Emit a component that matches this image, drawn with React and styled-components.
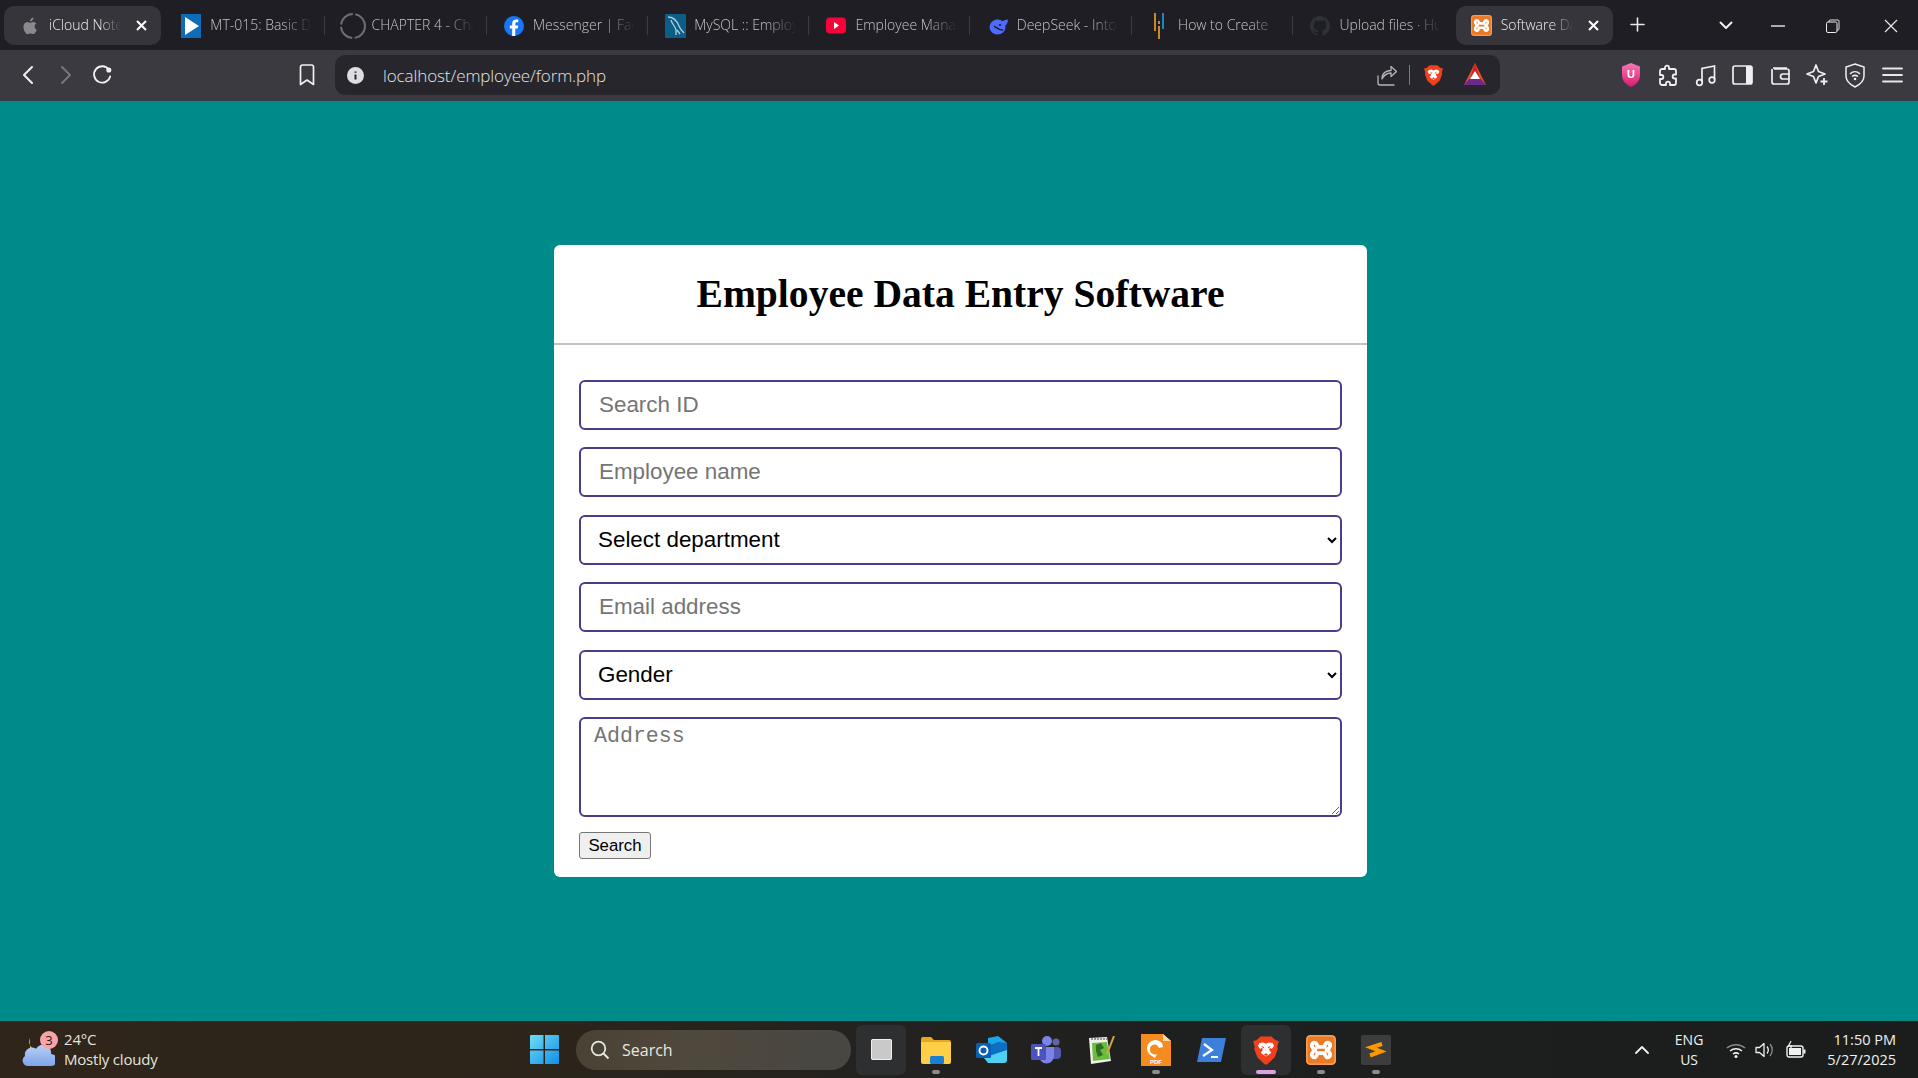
import React from "react";
import styled, { createGlobalStyle } from "styled-components";

const Global = createGlobalStyle`
  html, body { margin: 0; padding: 0; background: #008b8b; }
  * { box-sizing: border-box; }
`;

const Page = styled.div`
  width: 1918px; height: 1078px; overflow: hidden;
  display: flex; flex-direction: column;
  font-family: "Open Sans", "Noto Sans", sans-serif;
`;

/* ---------- tab strip ---------- */
const TabBar = styled.div`
  height: 50px; flex: none; background: #1e1e24;
  display: flex; align-items: flex-start; padding: 6px 0 0 4px; position: relative;
`;
const Tab = styled.div`
  position: relative; width: 157px; height: 39px; margin-right: 4.3px; flex: none;
  display: flex; align-items: center; padding-left: 15px;
  border-radius: 10px;
  background: ${p => (p.$active ? "#35353b" : "transparent")};
  ${p => p.$sep && `
    &::after { content: ""; position: absolute; right: -3px; top: 10px; height: 19px; width: 1px; background: #3b3b42; }
  `}
`;
const TabIcon = styled.span`
  width: 22px; height: 24px; flex: none; display: flex; align-items: center; justify-content: center;
  margin-right: 8px;
`;
const TabTitle = styled.span`
  font-size: 14px; font-weight: 300; white-space: nowrap; overflow: hidden; padding-bottom: 2px;
  color: ${p => (p.$active ? "#f0f0f2" : "#c6c6ca")};
  width: ${p => (p.$active ? "72px" : "102px")};
  -webkit-mask-image: linear-gradient(90deg, #000 70%, transparent 100%);
  mask-image: linear-gradient(90deg, #000 70%, transparent 100%);
`;
const TabClose = styled.span`
  position: absolute; right: 14px; top: 14px; width: 11px; height: 11px; display: flex;
`;
const NewTab = styled.span`
  width: 15px; height: 15px; margin: 11px 0 0 13px; display: flex; flex: none;
`;
const WindowControls = styled.div`
  margin-left: auto; height: 39px; display: flex; align-items: center; padding-right: 19px;
`;
const WinBtn = styled.span`
  display: flex; margin-left: ${p => p.$gap}px; width: 16px; justify-content: center;
`;

/* ---------- toolbar ---------- */
const Toolbar = styled.div`
  height: 51px; flex: none; background: #3a3a40; display: flex; align-items: center;
  padding: 0 13px 1px 18px;
`;
const NavBtn = styled.span`
  display: flex; width: 20px; justify-content: center; flex: none; margin-right: ${p => p.$mr || 0}px;
`;
const UrlBar = styled.div`
  width: 1165px; height: 40px; flex: none; background: #26262c; border-radius: 10px;
  display: flex; align-items: center; padding-left: 12px; margin-right: 119px;
`;
const UrlText = styled.span`
  font-size: 17px; font-weight: 300; color: #e4e4e6; margin-left: 19px; letter-spacing: -0.1px; flex: 1;
`;
const UrlIcon = styled.span`
  display: flex; margin-right: ${p => p.$mr || 0}px; flex: none;
`;
const UrlSep = styled.span`
  width: 1px; height: 20px; background: #77777c; margin-right: 14px; flex: none;
`;
const ExtIcons = styled.div`
  display: flex; align-items: center; gap: 13.3px;
`;
const ExtIcon = styled.span` display: flex; width: 24px; justify-content: center; `;

/* ---------- page ---------- */
const Main = styled.main`
  flex: 1; background: #008b8b; display: flex; align-items: center; justify-content: center;
  padding-left: 3px;
`;
const Card = styled.div`
  width: 813px; background: #fff; border-radius: 6px;
`;
const CardHeader = styled.header`
  height: 100px; border-bottom: 2px solid #c2c2c2; display: flex; align-items: center; justify-content: center;
`;
const Title = styled.h1`
  margin: 0; font: bold 39.6px "Liberation Serif", serif; color: #000;
`;
const Form = styled.form`
  padding: 35px 25px 18px 25px; display: flex; flex-direction: column; gap: 17.5px; align-items: flex-start;
`;
const fieldBase = `
  width: 763px; border: 2px solid #483d8b; border-radius: 6px; background: #fff; outline: none;
`;
const TextField = styled.input`
  ${fieldBase}
  height: 50px; padding: 0 18px; font: 22.4px "Liberation Sans", sans-serif; color: #000;
  &::placeholder { color: #757575; opacity: 1; }
`;
const SelectField = styled.select`
  ${fieldBase}
  height: 50px; padding: 0 2px 0 13px; font: 22.4px "Liberation Sans", sans-serif; color: #000;
`;
const AreaField = styled.textarea`
  ${fieldBase}
  height: 100px; padding: 5px 13px; font: 21.6px "Liberation Mono", monospace; display: block;
  &::placeholder { color: #757575; opacity: 1; }
`;
const SubmitBtn = styled.button`
  width: 72px; height: 27px; margin-top: -2.5px; padding: 0; border: 1px solid #767676; border-radius: 3px;
  background: #efefef; color: #000; font: 16.8px "Liberation Sans", sans-serif;
`;

/* ---------- taskbar ---------- */
const Taskbar = styled.footer`
  height: 57px; flex: none; display: flex; align-items: center; position: relative;
  background: linear-gradient(90deg, #30251a 0%, #2b251b 28%, #24221f 46%, #1e1f1f 62%, #1b1d1d 100%);
  color: #f2f2f2; padding-left: 22px;
`;
const Weather = styled.div`
  width: 508px; flex: none; display: flex; align-items: center; gap: 9px;
`;
const WeatherIcon = styled.div` position: relative; width: 33px; height: 40px; flex: none; `;
const Badge = styled.span`
  position: absolute; left: 18px; top: 1px; width: 18px; height: 18px; border-radius: 50%;
  background: #f8a3a8; color: #2a1a14; font-size: 13px; line-height: 18px; text-align: center;
`;
const WeatherText = styled.div`
  font-size: 15px; line-height: 20px; display: flex; flex-direction: column; color: #e6e3de;
  letter-spacing: -0.2px; padding-bottom: 2px;
`;
const StartBtn = styled.span` display: flex; margin-right: 17px; flex: none; `;
const SearchPill = styled.div`
  width: 275px; height: 40px; border-radius: 20px; flex: none;
  background: linear-gradient(90deg, #4a4234, #4f483c 40%, #484743);
  display: flex; align-items: center; padding-left: 14px; gap: 12px;
  font-size: 16px; color: #e8e6e2;
`;
const Apps = styled.div` display: flex; gap: 5px; margin-left: 5px; height: 50px; flex: none; `;
const AppCell = styled.div`
  position: relative; width: 50px; height: 50px; border-radius: 6px;
  display: flex; align-items: center; justify-content: center;
  background: ${p => (p.$hl ? "#2e2f30" : "transparent")};
  ${p => p.$dot && `
    &::after { content: ""; position: absolute; bottom: 1px; left: 50%; transform: translateX(-50%);
      height: 4px; border-radius: 2px;
      width: ${p.$dot === "on" ? "20px" : "8px"};
      background: ${p.$dot === "on" ? "#d8a3de" : "#8b8c8c"}; }
  `}
`;
const Tray = styled.div`
  margin-left: auto; display: flex; align-items: center; padding-right: 22px; color: #f0f0f0;
`;
const TrayIcon = styled.span` display: flex; margin-right: ${p => p.$mr}px; `;
const Lang = styled.div`
  font-size: 14px; line-height: 20px; text-align: center; margin-right: 23px; display: flex; flex-direction: column;
`;
const Clock = styled.div`
  font-size: 14.5px; line-height: 20px; text-align: right; display: flex; flex-direction: column; margin-left: 21px;
`;

/* ---------- icons ---------- */
const S = ({ w = 24, h = w, vb, children, ...r }) => (
  <svg width={w} height={h} viewBox={vb || `0 0 ${w} ${h}`} fill="none" {...r}>{children}</svg>
);
const Xmark = ({ s = 11, c = "#fff", sw = 2 }) => (
  <S w={s}><path d={`M1 1L${s - 1} ${s - 1}M${s - 1} 1L1 ${s - 1}`} stroke={c} strokeWidth={sw} /></S>
);
const Apple = () => (
  <S w={18} h={20} vb="0 0 18 20">
    <path fill="#8a8a8e" d="M13.6 10.5c0-2 1.6-3 1.7-3-1-1.4-2.4-1.6-3-1.6-1.2-.1-2.4.8-3 .8-.7 0-1.6-.8-2.7-.8-1.4 0-2.7.8-3.4 2-1.5 2.5-.4 6.3 1 8.3.7 1 1.5 2.1 2.6 2 1-.1 1.4-.7 2.7-.7s1.6.7 2.7.6c1.1 0 1.8-1 2.5-2 .8-1.1 1.1-2.2 1.1-2.3 0 0-2.2-.8-2.2-3.3zM11.5 4.3c.6-.7 1-1.7.9-2.7-.9 0-1.9.6-2.5 1.3-.5.6-1 1.6-.9 2.6 1 .1 1.9-.5 2.5-1.2z"/>
  </S>
);
const Play = () => (
  <S w={20} h={24}>
    <rect width="20" height="24" fill="#0f6cb6" />
    <path d="M4 3L18 12L4 21Z" fill="#fff" />
  </S>
);
const Spinner = () => (
  <svg width="26" height="26" viewBox="0 0 26 26" fill="none" style={{ flex: "none" }}>
    <circle cx="13" cy="13" r="12" stroke="#6e6e72" strokeWidth="2" strokeDasharray="17 2.5" />
  </svg>
);
const Fb = () => (
  <S w={20} h={20}>
    <circle cx="10" cy="10" r="10" fill="#1877f2" />
    <path fill="#fff" d="M11.3 20v-7.4h2.4l.5-3h-2.9V7.800c0-.9.4-1.600 1.700-1.600h1.300V3.700c-.6-.1-1.400-.2-2.100-.2-2.500 0-4 1.500-4 4v2.100H5.800v3h2.400V20z"/>
  </S>
);
const Mysql = () => (
  <S w={21} h={24}>
    <rect width="21" height="24" rx="1" fill="#0c5e86" />
    <path d="M3 3C8 3 12 7 14 12C15 15 17 17 19 19M6 6C7 10 10 12 11 16L11 21M12 16L15 20" stroke="#a9cfe0" strokeWidth="1.3" />
  </S>
);
const Yt = () => (
  <S w={20} h={17}>
    <rect width="20" height="16" y=".5" rx="4" fill="#f6033a" />
    <path d="M8 5L13 8.5L8 12Z" fill="#fff" />
  </S>
);
const Deep = () => (
  <S w={20} h={18}>
    <ellipse cx="9.5" cy="10" rx="8" ry="7.5" fill="#4d6bfe" />
    <path d="M13 6C15 3 18 3 20 2.5C20 6 18 9 15 10Z" fill="#4d6bfe" />
    <path d="M6 9C9 11 11 13 15 13" stroke="#1e1e24" strokeWidth="1.5" />
    <path d="M9 2L10.5 5L7 5Z" fill="#4d6bfe" />
    <circle cx="12" cy="8" r="1.1" fill="#1e1e24" />
  </S>
);
const Htc = () => (
  <S w={12} h={26}>
    <rect x="1" y="0" width="2" height="18" fill="#c8882f" />
    <rect x="5" y="8" width="2" height="18" fill="#c8882f" />
    <rect x="9" y="0" width="2" height="16" fill="#1e86b8" />
    <rect x="5" y="11" width="2" height="2" fill="#1e1e24" />
  </S>
);
const Gh = () => (
  <svg width="20" height="20" viewBox="0 0 16 16">
    <path fill="#2e3136" d="M8 0C3.58 0 0 3.58 0 8c0 3.54 2.29 6.53 5.47 7.59.4.07.55-.17.55-.38 0-.19-.01-.82-.01-1.49-2.01.37-2.53-.49-2.69-.94-.09-.23-.48-.94-.82-1.13-.28-.15-.68-.52-.01-.53.63-.01 1.08.58 1.23.82.72 1.21 1.87.87 2.33.66.07-.52.28-.87.51-1.07-1.78-.2-3.64-.89-3.64-3.95 0-.87.31-1.59.82-2.15-.08-.2-.36-1.02.08-2.12 0 0 .67-.21 2.2.82.64-.18 1.32-.27 2-.27s1.36.09 2 .27c1.53-1.04 2.2-.82 2.2-.82.44 1.1.16 1.92.08 2.12.51.56.82 1.27.82 2.15 0 3.07-1.87 3.75-3.65 3.95.29.25.54.73.54 1.48 0 1.07-.01 1.93-.01 2.2 0 .21.15.46.55.38A8.01 8.01 0 0016 8c0-4.42-3.58-8-8-8z"/>
  </svg>
);
const Xampp = ({ s = 21 }) => (
  <svg width={s} height={s} viewBox="0 0 24 24">
    <rect width="24" height="24" rx="3.5" fill="#ea7a25" />
    <rect x=".7" y=".7" width="22.6" height="22.6" rx="3" fill="none" stroke="#f6a866" strokeWidth="1" />
    <path d="M9 9.5C9 6.5 6.8 5.5 5.5 6.5C4 7.7 4.5 10.5 7.5 12C4.5 13.5 4 16.3 5.5 17.5C6.8 18.5 9 17.5 9 14.5H15C15 17.5 17.2 18.5 18.5 17.5C20 16.3 19.5 13.5 16.5 12C19.5 10.5 20 7.7 18.5 6.5C17.2 5.5 15 6.5 15 9.5Z" stroke="#fff" strokeWidth="3" fill="none" strokeLinejoin="round" />
  </svg>
);
const Brave = ({ w = 19, h = 22 }) => (
  <svg width={w} height={h} viewBox="0 0 24 28">
    <path fill="#f1401c" d="M3 5L7 1.5H17L21 5L24 5.5L22.5 11L23 13L20 21L13 27.5H11L4 21L1 13L1.5 11L0 5.5Z" />
    <path fill="#fff" d="M6 7.5L9.5 7L12 8.2L14.5 7L18 7.5L19.5 10L17.5 13L15.5 12L15 14L17 16.5L14.5 18.5L12 20L9.5 18.5L7 16.5L9 14L8.5 12L6.5 13L4.5 10Z" />
    <path fill="#f1401c" d="M7.5 10L10.5 11.5L9.5 12.5ZM16.5 10L13.5 11.5L14.5 12.5ZM10 18L12 17L14 18L12 19.5Z" />
  </svg>
);
const Bat = () => (
  <S w={22} h={24}>
    <path d="M11 0L22 22H0Z" fill="#e8501f" />
    <path d="M11 0L16 16H6Z" fill="#c4232f" />
    <path d="M0 22L6 15H16L22 22Z" fill="#6a2a8c" />
    <path d="M11 8L16 16H6Z" fill="#fff" />
  </S>
);

const Stroke = ({ w = 24, h = 24, c = "#f0f0f2", sw = 1.7, d, ...r }) => (
  <S w={w} h={h} {...r}><path d={d} stroke={c} strokeWidth={sw} strokeLinecap="round" strokeLinejoin="round" /></S>
);

const Win = () => (
  <S w={29} h={29}>
    <defs>
      <linearGradient id="wn" x1="0" y1="0" x2="1" y2="1">
        <stop offset="0" stopColor="#6fdcf7" /><stop offset="1" stopColor="#0f8fe8" />
      </linearGradient>
    </defs>
    <path fill="url(#wn)" d="M0 1a1 1 0 011-1h12.5v14H0zM15 0h13a1 1 0 011 1v13H15zM0 15.5h13.5V29H1a1 1 0 01-1-1zM15 15.5h14V28a1 1 0 01-1 1H15z" />
  </S>
);

const Folder = () => (
  <S w={30} h={28}>
    <path d="M0 3a2 2 0 012-2h8l3 3h15a2 2 0 012 2v4H0z" fill="#e8a71c" />
    <path d="M0 6h30v20a2 2 0 01-2 2H2a2 2 0 01-2-2z" fill="#ffcf48" />
    <rect x="9" y="20" width="14" height="8" rx="1.5" fill="#1a7fd0" />
  </S>
);
const Outlook = () => (
  <S w={31} h={28}>
    <path d="M12 2L22 0L31 7V22A3 3 0 0128 25H12Z" fill="#19a7e6" />
    <path d="M12 10L22 6L31 7V14L12 20Z" fill="#0c6fc0" />
    <path d="M8 22L31 14V24A3 3 0 0128 27H12Z" fill="#4fd0f2" />
    <rect x="0" y="7" width="15" height="15" rx="1.5" fill="#0a5fb4" />
    <circle cx="7.5" cy="14.5" r="4" stroke="#fff" strokeWidth="1.9" />
  </S>
);
const Teams = () => (
  <S w={30} h={28}>
    <circle cx="25" cy="6" r="3.5" fill="#6264a7" />
    <rect x="20" y="11" width="10" height="12" rx="4" fill="#5558af" />
    <circle cx="16" cy="5" r="5" fill="#7b83eb" />
    <path d="M8 11H23V20A7.5 7.5 0 018 20Z" fill="#7b83eb" />
    <rect x="0" y="8" width="15" height="16" rx="1.5" fill="#4b53bc" />
    <path d="M4 12H11M7.5 12V20" stroke="#fff" strokeWidth="1.8" />
  </S>
);
const Notepad = () => (
  <S w={28} h={30}>
    <path d="M2 3L20 2L24 26L4 29Z" fill="#eef2e8" />
    <path d="M5 8L20 7L23 24L6 26Z" fill="#6dbb3c" />
    <path d="M9 10L14 8L17 13L13 15L16 20L11 22L9 16Z" fill="#2e6e25" />
    <path d="M20 19L27 1" stroke="#d9a63a" strokeWidth="2" />
    <path d="M4 4H20" stroke="#7a7a7a" strokeWidth="1.5" strokeDasharray="2 1" />
  </S>
);
const Foxit = () => (
  <S w={30} h={32}>
    <path d="M0 0H22L30 7V32H0Z" fill="#f68b1f" />
    <path d="M22 0L30 7H22Z" fill="#ffd9a8" />
    <path d="M21 9A8 8 0 108 20L14 24L16 20A5 5 0 1116 11L18 14L22 13Z" fill="#fff" />
    <text x="15" y="30" textAnchor="middle" fontSize="6" fontWeight="700" fill="#fff" fontFamily="Liberation Sans">PDF</text>
  </S>
);
const Ps = () => (
  <S w={29} h={24}>
    <path d="M5 0H29L24 24H0Z" fill="#3f7fdc" />
    <path d="M7 6L15 12L6 18M14 19H21" stroke="#fff" strokeWidth="2.2" />
  </S>
);
const Sublime = () => (
  <S w={30} h={30}>
    <rect width="30" height="30" rx="2" fill="#3d3d3d" />
    <path d="M21 9L10 12.5L20 16.5L9 20.5" stroke="#ff9800" strokeWidth="4" />
  </S>
);
const Cloud = () => (
  <svg width="33" height="38" viewBox="0 0 33 38">
    <defs>
      <linearGradient id="cl" x1="0" y1="0" x2="0" y2="1">
        <stop offset="0" stopColor="#b9d0f6" /><stop offset="1" stopColor="#7fa4ea" />
      </linearGradient>
    </defs>
    <path d="M8 8A8 8 0 0018 19L8 18Z" fill="#f2a52c" />
    <path d="M6 36A5.5 5.5 0 013 26A7 7 0 0114 19A8 8 0 0129 24A6 6 0 0129 36Z" fill="url(#cl)" />
  </svg>
);

const tabs = [
  { t: "iCloud Notes", i: <Apple />, c: true },
  { t: "MT-015: Basic Data", i: <Play />, sep: true },
  { t: "CHAPTER 4 - Chapter", i: <Spinner />, sep: true },
  { t: "Messenger | Facebook", i: <Fb />, sep: true },
  { t: "MySQL :: Employees", i: <Mysql />, sep: true },
  { t: "Employee Management", i: <Yt />, sep: true },
  { t: "DeepSeek - Into the", i: <Deep />, sep: true },
  { t: "How to Create", i: <Htc />, sep: true },
  { t: "Upload files · Hub", i: <Gh />, sep: false },
  { t: "Software Data Entry", i: <Xampp />, active: true },
];

export default function App() {
  return (
    <Page>
      <Global />
      <TabBar>
        {tabs.map(x => (
          <Tab key={x.t} $active={x.active || x.c} $sep={x.sep}>
            <TabIcon>{x.i}</TabIcon>
            <TabTitle $active={x.active || x.c}>{x.t}</TabTitle>
            {(x.active || x.c) && <TabClose><Xmark /></TabClose>}
          </Tab>
        ))}
        <NewTab>
          <Stroke w={15} h={15} sw={1.6} d="M7.5 1V14M1 7.5H14" c="#e8e8ea" />
        </NewTab>
        <WindowControls>
          <WinBtn><Stroke w={14} h={9} sw={2} d="M1.5 1.5L7 7L12.5 1.5" /></WinBtn>
          <WinBtn $gap={36}><Stroke w={14} h={2} sw={1.3} d="M0 1H14" c="#ddd" /></WinBtn>
          <WinBtn $gap={39}>
            <S w={14} h={14}>
              <path d="M3 3V2a1 1 0 011-1h8a1 1 0 011 1v8a1 1 0 01-1 1h-1" stroke="#ddd" />
              <rect x=".5" y="3" width="10.5" height="10.5" rx="1.5" stroke="#eee" />
            </S>
          </WinBtn>
          <WinBtn $gap={42}><Xmark s={14} c="#e8e8ea" sw={1.2} /></WinBtn>
        </WindowControls>
      </TabBar>

      <Toolbar>
        <NavBtn $mr={18}><Stroke w={12} h={20} sw={2} d="M10 2L2 10L10 18" /></NavBtn>
        <NavBtn $mr={16}><Stroke w={12} h={20} sw={2} c="#77777c" d="M2 2L10 10L2 18" /></NavBtn>
        <NavBtn $mr={185}>
          <S w={22} h={22}>
            <path d="M18.5 5A9 9 0 1 0 20 12.5" stroke="#f0f0f2" strokeWidth="2" strokeLinecap="round" />
            <circle cx="18.5" cy="5.5" r="2.8" fill="#f0f0f2" />
          </S>
        </NavBtn>
        <NavBtn $mr={18}><Stroke w={16} h={22} sw={1.7} d="M1.5 3A2 2 0 013.5 1H12.5A2 2 0 0114.5 3V20.5L8 16L1.5 20.5Z" /></NavBtn>
        <UrlBar>
          <UrlIcon>
            <S w={17} h={17}>
              <circle cx="8.5" cy="8.5" r="8.5" fill="#dedee0" />
              <path d="M8.5 7.5V12.5M8.5 4.5V5.8" stroke="#26262c" strokeWidth="2" />
            </S>
          </UrlIcon>
          <UrlText>localhost/employee/form.php</UrlText>
          <UrlIcon $mr={12}>
            <Stroke w={20} h={21} sw={1.3} c="#b5b5b8" d="M1 11V18A2 2 0 003 20H17M5 14C5 8 9 5.5 14 5.5V1.5L19.5 6.5L14 11.5V8C10 8 7 10 5 14Z" />
          </UrlIcon>
          <UrlSep />
          <UrlIcon $mr={21}><Brave /></UrlIcon>
          <UrlIcon $mr={14}><Bat /></UrlIcon>
        </UrlBar>
        <ExtIcons>
          <ExtIcon>
            <S w={18} h={24}>
              <defs>
                <linearGradient id="ub" x1="0" y1="0" x2="0" y2="1">
                  <stop offset="0" stopColor="#f57ab0" /><stop offset="1" stopColor="#d81b72" />
                </linearGradient>
              </defs>
              <path d="M9 0L18 3.5V13C18 18 13 22 9 24C5 22 0 18 0 13V3.5Z" fill="url(#ub)" />
              <text x="9" y="15" textAnchor="middle" fontSize="11" fontWeight="700" fill="#fff" fontFamily="Liberation Sans">U</text>
            </S>
          </ExtIcon>
          <ExtIcon>
            <Stroke w={22} h={24} sw={1.8} d="M8 4.5C8 2 12 2 12 4.5V6H17A2 2 0 0119 8V11.5H17.5C15 11.5 15 15.5 17.5 15.5H19V20A2 2 0 0117 22H13V20.5C13 18 9 18 9 20.5V22H5A2 2 0 013 20V16H4.5C7 16 7 12 4.5 12H3V8A2 2 0 015 6H8Z" />
          </ExtIcon>
          <ExtIcon>
            <S w={22} h={24}>
              <path d="M7 19V5.5L19.5 3V16.5" stroke="#f0f0f2" strokeWidth="1.7" />
              <circle cx="4.5" cy="19.5" r="2.8" stroke="#f0f0f2" strokeWidth="1.7" />
              <circle cx="17" cy="17" r="2.8" stroke="#f0f0f2" strokeWidth="1.7" />
            </S>
          </ExtIcon>
          <ExtIcon>
            <S w={21} h={20}>
              <rect x="1" y="1" width="19" height="18" rx="2" stroke="#f0f0f2" strokeWidth="1.7" />
              <path d="M14 1H18A2 2 0 0120 3V17A2 2 0 0118 19H14Z" fill="#f0f0f2" />
            </S>
          </ExtIcon>
          <ExtIcon>
            <S w={21} h={22}>
              <path d="M3 4H17M2 5V18A2 2 0 004 20H17A2 2 0 0019 18V7A2 2 0 0017 5H4" stroke="#f0f0f2" strokeWidth="1.7" />
              <path d="M19 10H13A2.5 2.5 0 0013 15H19" stroke="#f0f0f2" strokeWidth="1.7" />
            </S>
          </ExtIcon>
          <ExtIcon>
            <S w={23} h={24}>
              <path d="M10 2L12.5 8.5L19 11L12.5 13.5L10 20L7.5 13.5L1 11L7.5 8.5Z" stroke="#f0f0f2" strokeWidth="1.7" strokeLinejoin="round" />
              <path d="M18 15V22M14.5 18.5H21.5" stroke="#f0f0f2" strokeWidth="1.8" />
            </S>
          </ExtIcon>
          <ExtIcon>
            <S w={20} h={25}>
              <path d="M10 1L19 4V13C19 18 14 22 10 24C6 22 1 18 1 13V4Z" stroke="#f0f0f2" strokeWidth="1.5" />
              <path d="M5 11C8 8 12 8 15 11M7 13.5C9 12 11 12 13 13.5" stroke="#f0f0f2" strokeWidth="1.5" />
              <circle cx="10" cy="16" r="1.3" fill="#f0f0f2" />
            </S>
          </ExtIcon>
          <ExtIcon>
            <Stroke w={21} h={16} sw={1.8} d="M1 1.5H20M1 8H20M1 14.5H20" c="#e8e8ea" />
          </ExtIcon>
        </ExtIcons>
      </Toolbar>

      <Main>
        <Card>
          <CardHeader><Title>Employee Data Entry Software</Title></CardHeader>
          <Form onSubmit={e => e.preventDefault()}>
            <TextField placeholder="Search ID" />
            <TextField placeholder="Employee name" />
            <SelectField defaultValue="">
              <option value="">Select department</option>
              <option>IT</option>
            </SelectField>
            <TextField placeholder="Email address" />
            <SelectField defaultValue="">
              <option value="">Gender</option>
              <option>Male</option>
            </SelectField>
            <AreaField placeholder="Address" />
            <SubmitBtn type="submit">Search</SubmitBtn>
          </Form>
        </Card>
      </Main>

      <Taskbar>
        <Weather>
          <WeatherIcon>
            <Cloud />
            <Badge>3</Badge>
          </WeatherIcon>
          <WeatherText>
            <span>24°C</span>
            <span>Mostly cloudy</span>
          </WeatherText>
        </Weather>
        <StartBtn><Win /></StartBtn>
        <SearchPill>
          <S w={20} h={20}>
            <circle cx="8.5" cy="8.5" r="6.8" stroke="#e8e6e2" strokeWidth="1.8" />
            <path d="M13.5 13.5L18.5 18.5" stroke="#e8e6e2" strokeWidth="2" />
          </S>
          Search
        </SearchPill>
        <Apps>
          <AppCell $hl>
            <S w={21} h={21}>
              <rect width="21" height="21" rx="2" fill="#c9c9c9" />
              <rect x=".5" y=".5" width="20" height="20" rx="1.5" stroke="#f0f0f0" />
            </S>
          </AppCell>
          <AppCell $dot="off"><Folder /></AppCell>
          <AppCell><Outlook /></AppCell>
          <AppCell><Teams /></AppCell>
          <AppCell><Notepad /></AppCell>
          <AppCell $dot="off"><Foxit /></AppCell>
          <AppCell><Ps /></AppCell>
          <AppCell $hl $dot="on"><Brave w={26} h={30} /></AppCell>
          <AppCell $dot="off"><Xampp s={30} /></AppCell>
          <AppCell $dot="off"><Sublime /></AppCell>
        </Apps>
        <Tray>
          <TrayIcon $mr={26}><Stroke w={14} h={9} sw={1.8} d="M1 8L7 2L13 8" c="#f0f0f0" /></TrayIcon>
          <Lang><span>ENG</span><span>US</span></Lang>
          <TrayIcon $mr={9}>
            <S w={20} h={16}>
              <path d="M1 6C6 1.5 14 1.5 19 6" stroke="#8c8c8c" strokeWidth="1.5" />
              <path d="M4 9C7.5 6 12.5 6 16 9M7 12C9 10.5 11 10.5 13 12" stroke="#f0f0f0" strokeWidth="1.5" />
              <circle cx="10" cy="14.5" r="1.5" fill="#f0f0f0" />
            </S>
          </TrayIcon>
          <TrayIcon $mr={11}>
            <S w={20} h={18}>
              <path d="M1 6.5H4.5L9 2.5V15.5L4.5 11.5H1Z" stroke="#f0f0f0" strokeWidth="1.3" strokeLinejoin="round" />
              <path d="M12 5.5C13.5 7.5 13.5 10.5 12 12.5" stroke="#f0f0f0" strokeWidth="1.3" />
              <path d="M15 3C18 6.5 18 11.5 15 15" stroke="#8c8c8c" strokeWidth="1.3" />
            </S>
          </TrayIcon>
          <S w={20} h={17}>
            <rect x="1" y="5" width="16" height="11" rx="2" stroke="#f0f0f0" strokeWidth="1.4" />
            <rect x="3" y="7" width="12" height="7" fill="#f0f0f0" />
            <rect x="17.5" y="8.5" width="2" height="4" fill="#f0f0f0" />
            <path d="M5 0L2.5 5H5.5L4 9" stroke="#f0f0f0" strokeWidth="1.2" />
          </S>
          <Clock><span>11:50 PM</span><span>5/27/2025</span></Clock>
        </Tray>
      </Taskbar>
    </Page>
  );
}
